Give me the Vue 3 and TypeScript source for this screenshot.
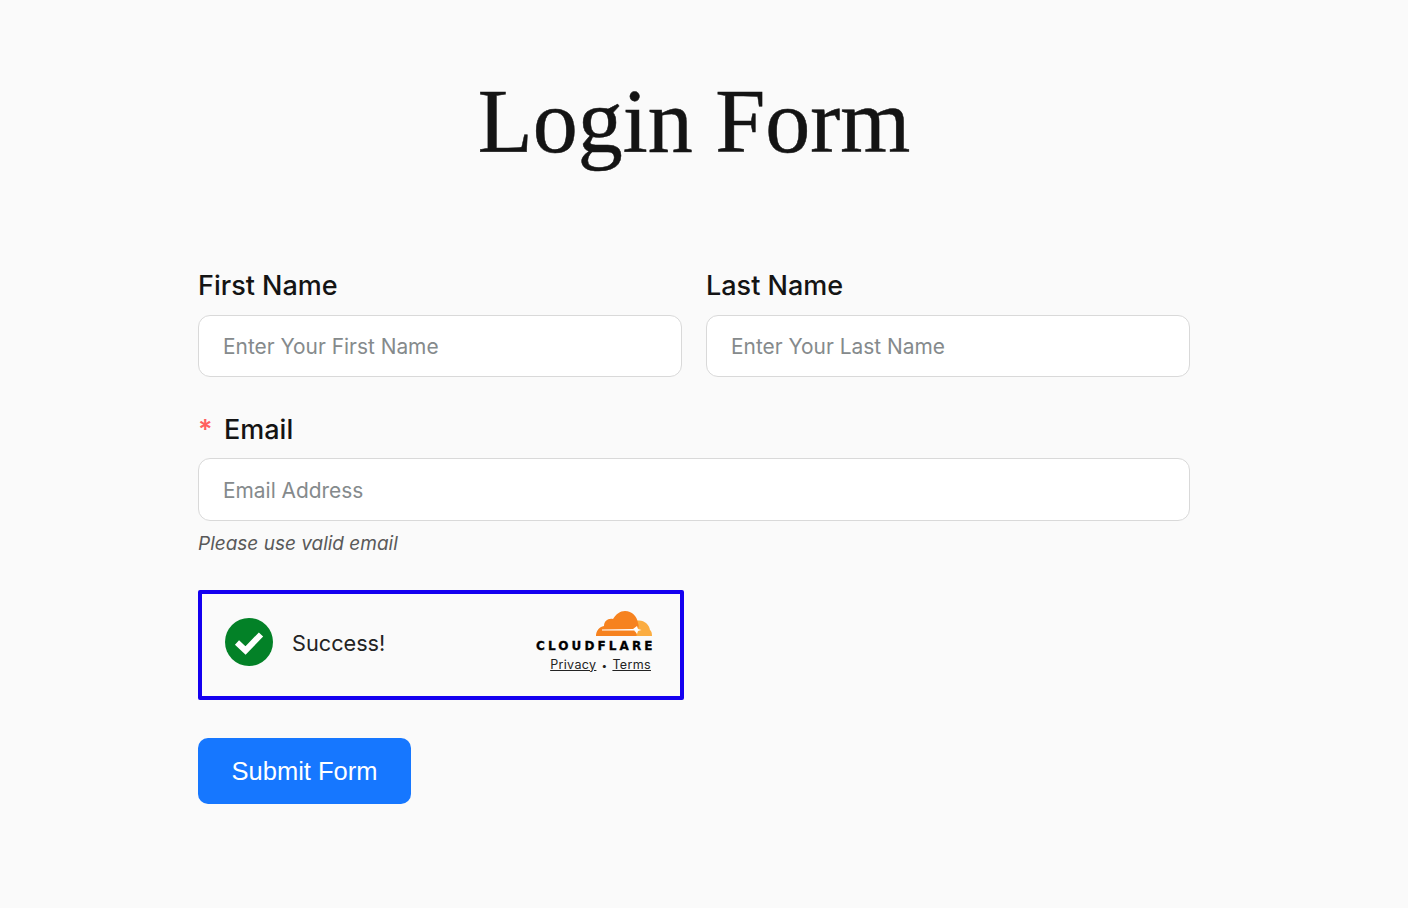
<script setup lang="ts">
const nameFields = [
  { label: 'First Name', placeholder: 'Enter Your First Name' },
  { label: 'Last Name', placeholder: 'Enter Your Last Name' },
]
</script>

<template>
  <main class="page">
    <h1 class="title">Login Form</h1>
    <form class="form" @submit.prevent>
      <div class="row">
        <div v-for="f in nameFields" :key="f.label" class="field">
          <label class="label">{{ f.label }}</label>
          <input class="input" type="text" :placeholder="f.placeholder" />
        </div>
      </div>
      <div class="field email">
        <label class="label"><span class="req">*</span>Email</label>
        <input class="input tall" type="email" placeholder="Email Address" />
        <p class="hint">Please use valid email</p>
      </div>
      <div class="widget">
        <svg class="check" viewBox="0 0 48 48" aria-hidden="true">
          <circle cx="24" cy="24" r="24" fill="#038127" />
          <path d="M12 24.500 L20.500 32.500 L36 16.500" fill="none" stroke="#fff" stroke-width="6" />
        </svg>
        <span class="success">Success!</span>
        <div class="brand">
          <svg class="cloud" viewBox="0 0 56 26" aria-hidden="true">
            <path fill="#fbad41" d="M40 10 C47 8 53 13 54 19 C55.500 20 56 22 56 25 L38 25 Z" />
            <path fill="#f6821f" d="M0 25 C0 20 3 16 8 15 C8 10 12 7 17 8 C20 3 24 0 29 0 C36 0 41 5 42 12 C43 15 43 17 41 18 L38 20 C40 20.500 41 22 40.500 25 Z" />
            <path fill="#fff" d="M6 18.400 L37 18 L41 15 L42 18 L45.500 19 L42 20 L41 23 L38.500 19.500 L6 19.400 Z" />
          </svg>
          <span class="wordmark">CLOUDFLARE</span>
          <span class="links"><a>Privacy</a><i>•</i><a>Terms</a></span>
        </div>
      </div>
      <button class="submit" type="submit">Submit Form</button>
    </form>
  </main>
</template>

<style>
html, body { margin: 0; background: #fafafa; }
</style>

<style scoped>
.page {
  min-height: 908px;
  box-sizing: border-box;
  padding: 70px 218px 0 198px;
  background: #fafafa;
  font-family: Inter, "Liberation Sans", sans-serif;
}
.title {
  margin: 0;
  text-align: center;
  font-family: "Liberation Serif", serif;
  font-weight: 400;
  font-size: 90px;
  line-height: 103px;
  color: #141414;
  -webkit-text-stroke: 0.5px #141414;
}
.form { margin-top: 97px; display: flex; flex-direction: column; }
.row { display: flex; gap: 24px; }
.field { flex: 1; display: flex; flex-direction: column; }
.email { margin-top: 37px; }
.label {
  font-size: 27px;
  font-weight: 500;
  line-height: 32px;
  height: 32px;
  margin-bottom: 13px;
  color: #141414;
}
.email .label { margin-bottom: 12px; }
.req {
  display: inline-block;
  width: 26px;
  color: #ff5f5f;
  font-size: 27px;
  font-weight: 600;
}
.input {
  box-sizing: border-box;
  width: 100%;
  height: 62px;
  padding: 0 24px;
  border: 1px solid #d9d9d9;
  border-radius: 12px;
  background: #fff;
  font: 400 20.9px Inter, sans-serif;
  outline: none;
}
.tall { height: 63px; padding-top: 2px; }
.input::placeholder { color: #858a8c; opacity: 1; }
.hint {
  margin: 11px 0 0;
  font-size: 19px;
  line-height: 24px;
  font-style: italic;
  color: #595959;
}
.widget {
  box-sizing: border-box;
  margin-top: 34px;
  width: 486px;
  height: 110px;
  border: 4px solid #1400f0;
  border-radius: 2px;
  display: flex;
  align-items: center;
  padding: 0 28px 0 23px;
  background: #fafafa;
}
.check { width: 48px; height: 48px; flex: none; margin-bottom: 7px; }
.success { margin-left: 19px; margin-bottom: 4px; font-size: 21.7px; color: #232323; }
.brand {
  margin-left: auto;
  margin-bottom: 7px;
  display: flex;
  flex-direction: column;
  align-items: flex-end;
}
.cloud { width: 56px; height: 26px; display: block; margin-bottom: 1px; }
.wordmark {
  font-family: "DejaVu Sans", sans-serif;
  font-size: 12px;
  font-weight: 700;
  line-height: 16px;
  letter-spacing: 3.1px;
  margin-right: -3.6px;
  color: #000;
  -webkit-text-stroke: 0.3px #000;
}
.links {
  margin-top: 3px;
  margin-right: 1px;
  font-size: 12.5px;
  letter-spacing: 0.35px;
  line-height: 16px;
  color: #232323;
  display: flex;
  gap: 6px;
}
.links a { text-decoration: underline; }
.links i { font-style: normal; font-size: 10px; margin: 0 -1px; }
.submit {
  margin-top: 38px;
  width: 213px;
  height: 66px;
  border: 0;
  border-radius: 10px;
  background: #1677ff;
  color: #fff;
  font: 400 25.5px "Liberation Sans", Arial, sans-serif;
}
</style>
